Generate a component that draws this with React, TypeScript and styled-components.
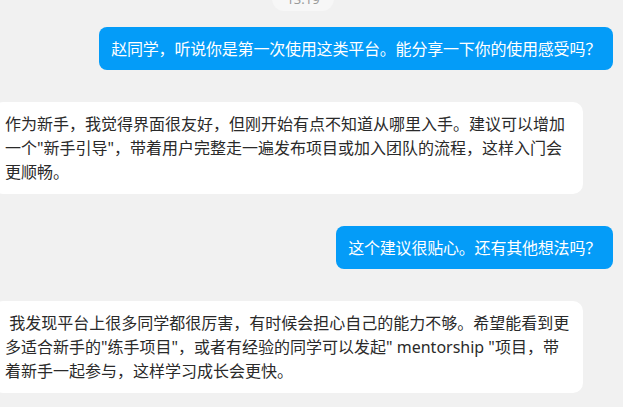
import React from 'react'
import styled, { createGlobalStyle } from 'styled-components'

const GlobalStyle = createGlobalStyle`
  html, body {
    margin: 0;
    padding: 0;
    background: #f1f1f1;
    overflow: hidden;
  }
  body {
    font-family: 'Noto Sans', 'Noto Sans CJK SC', sans-serif;
  }
`

const Screen = styled.div`
  width: 623px;
  height: 407px;
  overflow: hidden;
  background: #f1f1f1;
`

// the view is scrolled a little: the left column starts past the window edge
const Thread = styled.div`
  display: flex;
  flex-direction: column;
  margin-left: -17px;
  margin-top: -13px;
  padding: 0 10px;
`

const TimeRow = styled.div`
  display: flex;
  justify-content: center;
  margin-bottom: 16px;
`

const TimePill = styled.span`
  display: inline-block;
  padding: 3px 14px;
  height: 18px;
  line-height: 18px;
  border-radius: 12px;
  background: #f7f7f7;
  color: #9a9a9a;
  font-size: 13px;
`

const Row = styled.div<{ $mine?: boolean }>`
  display: flex;
  justify-content: ${({ $mine }) => ($mine ? 'flex-end' : 'flex-start')};
  margin-bottom: 32px;
`

const Bubble = styled.div<{ $mine?: boolean }>`
  box-sizing: border-box;
  max-width: ${({ $mine }) => ($mine ? '520px' : '590px')};
  width: ${({ $mine }) => ($mine ? 'auto' : '590px')};
  padding: ${({ $mine }) => ($mine ? '10px 12px 9px' : '10px 12px')};
  border-radius: ${({ $mine }) => ($mine ? '8px' : '10px')};
  background: ${({ $mine }) => ($mine ? '#049cf8' : '#ffffff')};
  color: ${({ $mine }) => ($mine ? '#ffffff' : '#2a2a2a')};
  letter-spacing: ${({ $mine }) => ($mine ? '-0.2px' : '0')};
  font-size: 16px;
  line-height: 24px;
  white-space: pre-wrap;
`

const messages = [
  { mine: true, text: '赵同学，听说你是第一次使用这类平台。能分享一下你的使用感受吗？' },
  {
    mine: false,
    text: '作为新手，我觉得界面很友好，但刚开始有点不知道从哪里入手。建议可以增加一个"新手引导"，带着用户完整走一遍发布项目或加入团队的流程，这样入门会更顺畅。',
  },
  { mine: true, text: '这个建议很贴心。还有其他想法吗？' },
  {
    mine: false,
    text: ' 我发现平台上很多同学都很厉害，有时候会担心自己的能力不够。希望能看到更多适合新手的"练手项目"，或者有经验的同学可以发起" mentorship "项目，带着新手一起参与，这样学习成长会更快。',
  },
]

const App: React.FC = () => {
  return (
    <>
      <GlobalStyle />
      <Screen>
        <Thread>
          <TimeRow>
            <TimePill>13:19</TimePill>
          </TimeRow>
          {messages.map((m, i) => (
            <Row key={i} $mine={m.mine}>
              <Bubble $mine={m.mine}>{m.text}</Bubble>
            </Row>
          ))}
        </Thread>
      </Screen>
    </>
  )
}

export default App
